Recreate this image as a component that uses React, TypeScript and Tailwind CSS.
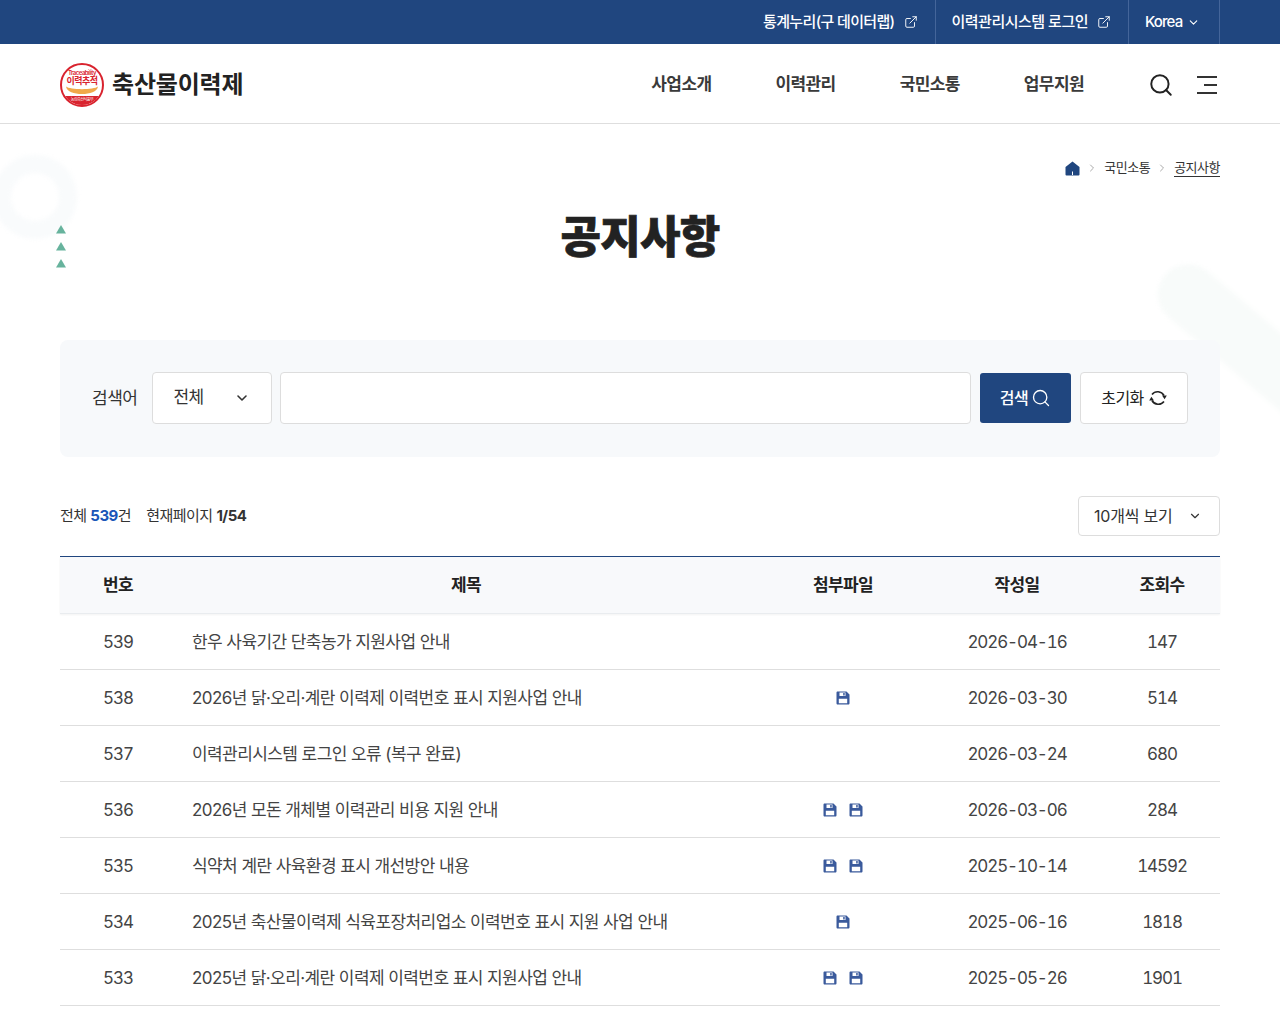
import { ChevronDown, ChevronRight, ExternalLink, Search } from 'lucide-react'

const rows = [
  { no: 539, title: '한우 사육기간 단축농가 지원사업 안내', files: 0, date: '2026-04-16', views: 147 },
  { no: 538, title: '2026년 닭·오리·계란 이력제 이력번호 표시 지원사업 안내', files: 1, date: '2026-03-30', views: 514 },
  { no: 537, title: '이력관리시스템 로그인 오류 (복구 완료)', files: 0, date: '2026-03-24', views: 680 },
  { no: 536, title: '2026년 모돈 개체별 이력관리 비용 지원 안내', files: 2, date: '2026-03-06', views: 284 },
  { no: 535, title: '식약처 계란 사육환경 표시 개선방안 내용', files: 2, date: '2025-10-14', views: 14592 },
  { no: 534, title: '2025년 축산물이력제 식육포장처리업소 이력번호 표시 지원 사업 안내', files: 1, date: '2025-06-16', views: 1818 },
  { no: 533, title: '2025년 닭·오리·계란 이력제 이력번호 표시 지원사업 안내', files: 2, date: '2025-05-26', views: 1901 },
]

function SaveIcon() {
  return (
    <svg width="14" height="14" viewBox="0 0 14 14">
      <path fillRule="evenodd" fill="#3a5a9c" d="M1.5 0.5H10.5L13.5 3.5V12.5C13.5 13 13 13.5 12.5 13.5H1.5C1 13.5 0.5 13 0.5 12.5V1.5C0.5 1 1 0.5 1.5 0.5ZM3.5 1.5V5H9.5V1.5ZM7.2 2H8.7V4.5H7.2ZM2.8 7.8V12.3H11.2V7.8Z" />
    </svg>
  )
}

function ResetIcon() {
  return (
    <svg width="18" height="18" viewBox="0 0 18 18" fill="none" stroke="#222" strokeWidth="1.6">
      <path d="M3 5.5A7.2 7.2 0 0 1 15 6.5" />
      <path d="M15 12.5A7.2 7.2 0 0 1 3 11.5" />
      <path d="M13 6.6H17.8L15.6 10.2Z" fill="#222" stroke="none" />
      <path d="M0.2 11.4H5L2.4 7.8Z" fill="#222" stroke="none" />
    </svg>
  )
}

function Logo() {
  return (
    <div className="relative h-[44px] w-[44px] shrink-0 overflow-hidden rounded-full border-2 border-[#d9232e] bg-white">
      <div className="mt-[4px] text-center text-[6px] leading-[7px] font-semibold text-[#d9232e]">Traceability</div>
      <div className="text-center text-[9px] leading-[10px] font-bold tracking-[-0.5px] text-[#d9232e]">이력추적</div>
      <svg width="40" height="9" viewBox="0 0 40 9" className="mt-[0px]">
        <path d="M4 0.5C8 4 32 4 36 0.5C35 6 28 8 20 8C12 8 5 6 4 0.5Z" fill="#f0a94a" />
      </svg>
      <div className="absolute right-0 bottom-0 left-0 h-[9px] bg-[#d9232e] text-center text-[4px] leading-[7px] text-white">농림축산식품부</div>
    </div>
  )
}

export default function App() {
  return (
    <div
      className="relative h-[1024px] overflow-hidden bg-white text-[#333] tracking-[-0.5px]"
      style={{ fontFamily: 'Inter, "Noto Sans CJK KR", sans-serif' }}
    >
      {/* top utility bar */}
      <div className="flex h-[44px] justify-end bg-[#20467f] pr-[60px] text-[15px] font-medium text-white">
        <a className="flex items-center gap-[9px] pr-[17px] pl-[17px] tracking-[-0.65px]">
          통계누리(구 데이터랩)
          <ExternalLink size={14} strokeWidth={1.6} />
        </a>
        <a className="flex items-center gap-[9px] border-l border-[#44659a] pr-[17px] pl-[16px]">
          이력관리시스템 로그인
          <ExternalLink size={14} strokeWidth={1.6} />
        </a>
        <a className="flex w-[92px] items-center gap-[5px] border-x border-[#44659a] pl-[16px] tracking-[-0.9px]">
          Korea
          <ChevronDown size={13} strokeWidth={2} />
        </a>
      </div>

      {/* header */}
      <header className="flex h-[80px] items-center border-b border-[#dedede] px-[60px] pt-[2px]">
        <div className="flex items-center gap-[8px]">
          <Logo />
          <span className="text-[24px] font-bold tracking-[-0.2px] text-[#222]">축산물이력제</span>
        </div>
        <nav className="ml-auto flex gap-[64px] text-[17px] font-bold tracking-[-0.6px] text-[#3a3a3a]">
          <a>사업소개</a>
          <a>이력관리</a>
          <a>국민소통</a>
          <a>업무지원</a>
        </nav>
        <Search size={26} strokeWidth={1.8} className="ml-[64px] text-[#222]" />
        <div className="mr-[3px] ml-[23px] flex w-[20px] flex-col items-end gap-[6px]">
          <span className="h-[2px] w-[20px] bg-[#333]" />
          <span className="h-[2px] w-[13px] bg-[#333]" />
          <span className="h-[2px] w-[20px] bg-[#333]" />
        </div>
      </header>

      {/* faint background shapes */}
      <div className="absolute top-[155px] left-[-7px] h-[84px] w-[84px] rounded-full border-[18px] border-[#f9fbfc] blur-[2px]" />
      <div className="absolute top-[245px] left-[1165px] h-[60px] w-[220px] origin-left rotate-[40deg] rounded-full bg-[#f8fbfa] blur-[2px]" />
      <div className="absolute top-[224px] left-[56px] flex flex-col gap-[7px]">
        {[0, 1, 2].map((i) => (
          <svg key={i} width="10" height="10" viewBox="0 0 10 10">
            <path d="M5 1L10 9.5H0Z" fill="#67b39d" />
          </svg>
        ))}
      </div>

      <main className="relative px-[60px]">
        {/* breadcrumb */}
        <div className="flex h-[88px] items-center justify-end text-[13px] text-[#333]">
          <svg width="15" height="15" viewBox="0 0 15 15" className="mr-[6px]">
            <path fillRule="evenodd" fill="#20467f" d="M7.5 0.5L14.5 6V13.5Q14.5 14.5 13.5 14.5H1.5Q0.5 14.5 0.5 13.5V6ZM7 10.5V14H8V10.5Z" />
          </svg>
          <ChevronRight size={12} className="text-[#aaa]" />
          <span className="mx-[6px]">국민소통</span>
          <ChevronRight size={12} className="text-[#aaa]" />
          <span className="ml-[6px] border-b border-[#333] leading-[17px]">공지사항</span>
        </div>

        <h1 className="mt-[-5px] text-center text-[44px] leading-[60px] font-black tracking-[-0.75px] text-[#222] [-webkit-text-stroke:0.7px_#222]">공지사항</h1>

        {/* search box */}
        <div className="mt-[73px] flex h-[117px] items-center rounded-[8px] bg-[#f7f9fb] pr-[32px] pb-[1px] pl-[32px]">
          <span className="mr-[15px] pt-[1px] text-[17px] text-[#333]">검색어</span>
          <div className="mr-[8px] flex h-[52px] w-[120px] items-center justify-between rounded-[4px] border border-[#dddddd] bg-white pr-[21px] pl-[20px] text-[17px]">
            전체
            <ChevronDown size={16} strokeWidth={2.4} />
          </div>
          <div className="h-[52px] flex-1 rounded-[4px] border border-[#dddddd] bg-white" />
          <button className="ml-[9px] flex h-[50px] w-[91px] items-center justify-center gap-[3px] rounded-[3px] bg-[#20467f] text-[16px] font-medium text-white">
            검색
            <Search size={20} strokeWidth={1.6} />
          </button>
          <button className="ml-[9px] flex h-[52px] w-[108px] items-center justify-center gap-[5px] rounded-[4px] border border-[#dddddd] bg-white text-[16px] text-[#222]">
            초기화
            <ResetIcon />
          </button>
        </div>

        {/* list summary */}
        <div className="mt-[39px] flex h-[40px] items-center">
          <span className="text-[15px] text-[#333]">
            전체 <b className="font-bold text-[#1a56b8]">539</b>건
            <span className="ml-[15px]">현재페이지 <b className="font-bold">1/54</b></span>
          </span>
          <div className="ml-auto flex h-[40px] w-[142px] items-center justify-between rounded-[4px] border border-[#dddddd] pr-[17px] pl-[15px] text-[16px] tracking-[-0.2px]">
            10개씩 보기
            <ChevronDown size={14} strokeWidth={2} />
          </div>
        </div>

        {/* notice table */}
        <table className="mt-[20px] w-full table-fixed border-t border-[#20467f] text-[17px] tracking-[-0.58px]">
          <colgroup>
            <col className="w-[116px]" />
            <col className="w-[580px]" />
            <col className="w-[174px]" />
            <col className="w-[174px]" />
            <col className="w-[116px]" />
          </colgroup>
          <thead>
            <tr className="h-[57px] border-b border-[#e9ecef] bg-[#f8f9fb] text-[#222] shadow-[0_1px_2px_rgba(0,0,0,0.05)]">
              <th className="pt-[1px] font-semibold">번호</th>
              <th className="pt-[1px] font-semibold">제목</th>
              <th className="pt-[1px] font-semibold">첨부파일</th>
              <th className="pt-[1px] font-semibold">작성일</th>
              <th className="pt-[1px] font-semibold">조회수</th>
            </tr>
          </thead>
          <tbody>
            {rows.map((r) => (
              <tr key={r.no} className="h-[56px] border-b border-[#dedede] text-[#444]">
                <td className="pt-[2px] text-center tracking-[-1.1px] tabular-nums">{r.no}</td>
                <td className="pt-[2px] pl-[16px]">{r.title}</td>
                <td>
                  <div className="flex justify-center gap-[12px]">
                    {Array.from({ length: r.files }).map((_, i) => (
                      <SaveIcon key={i} />
                    ))}
                  </div>
                </td>
                <td className="pt-[2px] text-center tracking-[-1.1px] tabular-nums">{r.date}</td>
                <td className="pt-[2px] text-center tracking-[-1.1px] tabular-nums">{r.views}</td>
              </tr>
            ))}
          </tbody>
        </table>
      </main>
    </div>
  )
}
